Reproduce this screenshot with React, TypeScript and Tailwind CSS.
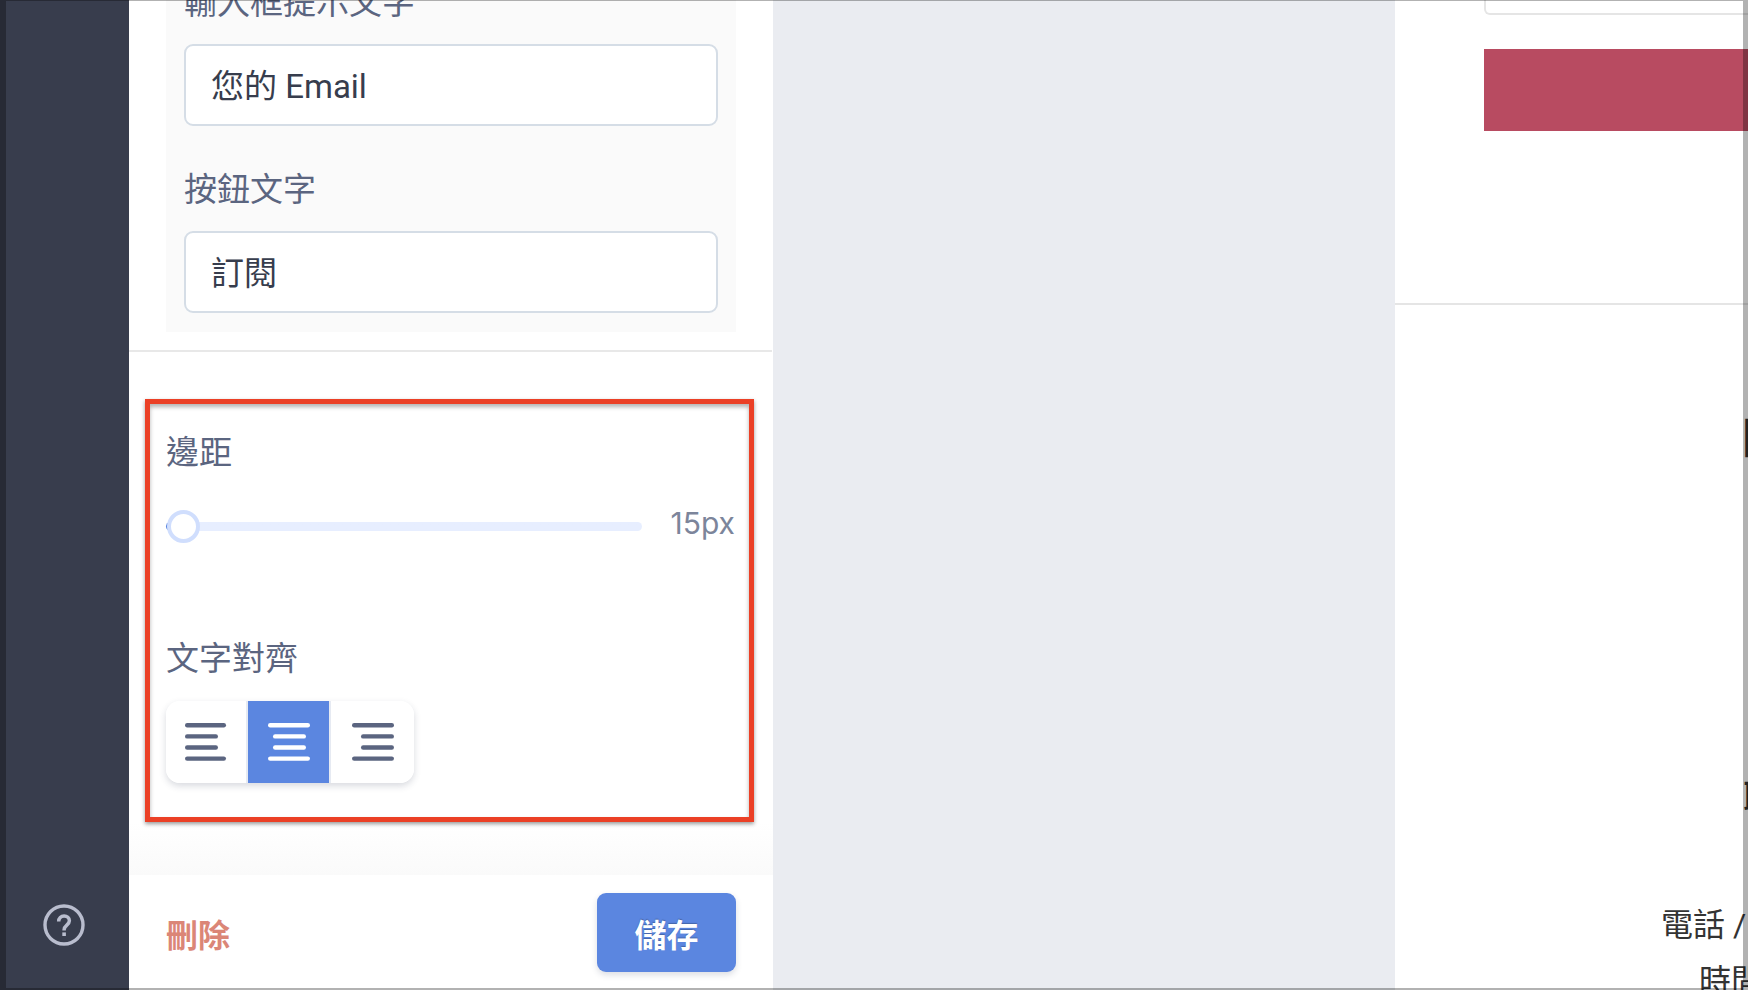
import { useState } from "react";

type Align = "left" | "center" | "right";

const alignBars: Record<Align, [number, number][]> = {
  left: [[0, 41], [0, 33], [0, 33], [0, 41]],
  center: [[0, 42], [5, 33], [5, 33], [0, 42]],
  right: [[0, 42], [9, 33], [9, 33], [0, 42]],
};

const alignNames: Record<Align, string> = {
  left: "靠左對齊",
  center: "置中對齊",
  right: "靠右對齊",
};

function AlignIcon({ kind }: { kind: Align }) {
  return (
    <svg width="42" height="39" viewBox="0 0 42 39" fill="currentColor" aria-hidden="true">
      {alignBars[kind].map(([x, width], i) => (
        <rect key={i} x={x} y={i * 11.1 + 0.1} width={width} height="4.4" rx="2.2" />
      ))}
    </svg>
  );
}

function HelpIcon() {
  return (
    <svg width="42" height="42" viewBox="0 0 42 42" fill="none" stroke="currentColor" aria-hidden="true">
      <circle cx="21" cy="21" r="19" strokeWidth="3.4" />
      <path d="M15.7 17.4c0-3.2 2.3-5.3 5.4-5.3 3 0 5.3 1.9 5.3 4.7 0 4.2-5.3 4.4-5.3 8.9v.9" strokeWidth="3.5" />
      <rect x="19.3" y="28.4" width="3.6" height="3.6" fill="currentColor" stroke="none" />
    </svg>
  );
}

function TextField({ id, label, initial }: { id: string; label: string; initial: string }) {
  const [value, setValue] = useState(initial);
  return (
    <div className="flex flex-col gap-[18px]">
      <label htmlFor={id} className="text-[33px] leading-[46px] text-[#5b6580]">
        {label}
      </label>
      <input
        id={id}
        type="text"
        value={value}
        onChange={(e) => setValue(e.target.value)}
        className="h-[82px] w-full rounded-[9px] border-2 border-[#d5dde6] bg-white px-[25px] pb-0.5 text-[33px] text-[#373d4d] outline-none"
      />
    </div>
  );
}

function SettingsPanel() {
  const [margin, setMargin] = useState(15);
  const [align, setAlign] = useState<Align>("center");

  return (
    <section className="flex w-[644px] shrink-0 flex-col bg-white">
      <div className="flex min-h-0 flex-1 flex-col justify-end overflow-hidden">
        <div className="mr-px border-b-2 border-[#e8e8e8] pr-9 pb-[18px] pl-[37px]">
          <div className="flex flex-col gap-[41px] bg-[#fafafa] px-[18px] pb-[19px]">
            <TextField id="placeholder-text" label="輸入框提示文字" initial="您的 Email" />
            <TextField id="button-text" label="按鈕文字" initial="訂閱" />
          </div>
        </div>
        <div className="bg-linear-to-b from-white from-90% to-[#fafafa] px-4 pt-[47px] pb-[53px]">
          <div className="mr-[3px] flex flex-col border-[5px] border-[#eb4026] pt-[26px] pr-3.5 pb-[34px] pl-4 shadow-[0_2px_4px_rgba(0,0,0,0.4),inset_0_3px_4px_rgba(0,0,0,0.3)]">
            <label htmlFor="margin" className="text-[33px] leading-[46px] text-[#5b6580]">
              邊距
            </label>
            <div className="mt-[30px] flex items-center gap-7">
              <input
                id="margin"
                type="range"
                min={15}
                max={200}
                value={margin}
                onChange={(e) => setMargin(Number(e.target.value))}
                className="h-[9px] min-w-0 flex-1 appearance-none rounded-full bg-linear-to-r from-[#5b86e0] from-[3%] to-[#e7eeff] to-[3%] pl-px [&::-webkit-slider-thumb]:size-[33px] [&::-webkit-slider-thumb]:appearance-none [&::-webkit-slider-thumb]:rounded-full [&::-webkit-slider-thumb]:border-4 [&::-webkit-slider-thumb]:border-solid [&::-webkit-slider-thumb]:border-[#d0defd] [&::-webkit-slider-thumb]:bg-white"
              />
              <output htmlFor="margin" className="pb-1.5 font-['Inter'] text-[30px] leading-[34px] text-[#7c859b]">
                {margin}px
              </output>
            </div>
            <h3 className="mt-[90px] text-[33px] leading-[46px] text-[#5b6580]">文字對齊</h3>
            <div
              role="group"
              aria-label="文字對齊"
              className="mt-[19px] grid h-[82px] w-[248px] grid-cols-[82px_83px_83px] divide-x-2 divide-[#e6eaf2] overflow-hidden rounded-[14px] bg-white shadow-[0_3px_7px_rgba(40,50,80,0.18)]"
            >
              {(Object.keys(alignBars) as Align[]).map((kind) => (
                <button
                  key={kind}
                  type="button"
                  aria-label={alignNames[kind]}
                  aria-pressed={align === kind}
                  onClick={() => setAlign(kind)}
                  className={
                    align === kind
                      ? "flex items-center justify-center bg-[#5b86e0] text-white"
                      : "flex items-center justify-center bg-white text-[#5b6580]"
                  }
                >
                  <AlignIcon kind={kind} />
                </button>
              ))}
            </div>
          </div>
        </div>
      </div>
      <footer className="flex shrink-0 items-center justify-between bg-white px-[37px] py-[18px]">
        <button type="button" className="pt-1.5 text-[32px] font-bold text-[#db8677]">
          刪除
        </button>
        <button
          type="button"
          className="h-[79px] w-[139px] rounded-[9px] bg-[#5b86e0] pt-1.5 text-[32px] font-bold text-white shadow-[0_3px_6px_rgba(40,50,80,0.16)] text-shadow-[0_-1px_1px_rgba(0,0,0,0.25)]"
        >
          儲存
        </button>
      </footer>
    </section>
  );
}

function Preview() {
  return (
    <main className="flex min-w-0 flex-1 bg-[#eaecf1] pl-[622px]">
      <div className="min-w-0 flex-1 overflow-hidden bg-white whitespace-nowrap text-[#333333]">
        <div className="border-b-2 border-[#e5e5e5] pb-[172px] pl-[89px]">
          <input
            type="email"
            aria-label="Email"
            className="block h-[15px] w-[600px] rounded-b-[6px] border-2 border-t-0 border-[#e5e5e5] bg-white outline-none"
          />
          <button type="button" aria-label="訂閱" className="mt-[34px] block h-[82px] w-[600px] bg-[#b84b61]" />
        </div>
        <h2 className="pt-[104px] pl-[347px] text-[42px] leading-[60px] font-bold">關於我們</h2>
        <h2 className="pt-[306px] pl-[348px] text-[37px] leading-[50px] font-medium">聯絡我們</h2>
        <p className="pt-[72px] pl-[266px] text-[32px] leading-[56px]">電話 / 傳真</p>
        <p className="pl-[304px] text-[32px] leading-[56px]">時間</p>
      </div>
    </main>
  );
}

export default function App() {
  return (
    <div className="relative flex h-screen overflow-hidden bg-white font-['Roboto','Noto_Sans_CJK_TC',sans-serif]">
      <nav className="flex w-[129px] shrink-0 flex-col items-center justify-end bg-[#383d4d] pr-0.5 pb-11">
        <button type="button" aria-label="說明" className="text-[#b9bdce]">
          <HelpIcon />
        </button>
      </nav>
      <SettingsPanel />
      <Preview />
      <div className="pointer-events-none absolute inset-0 border-t border-r-[5px] border-b-2 border-l-[6px] border-black/30" />
    </div>
  );
}
